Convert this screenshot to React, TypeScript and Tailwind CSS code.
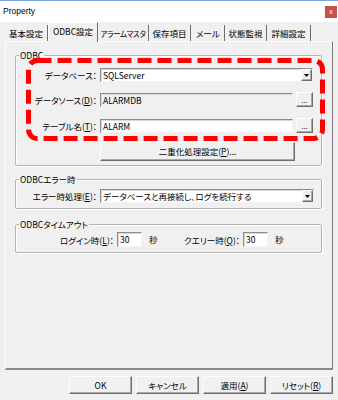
import React from 'react';

const raised =
  'bg-[#f0f0f0] border border-t-[#fcfcfc] border-l-[#fcfcfc] border-r-[#6e6e6e] border-b-[#6e6e6e] shadow-[inset_-1px_-1px_0_#a8a8a8]';
const sunken =
  'border border-t-[#8c8c8c] border-l-[#8c8c8c] border-r-[#f4f4f4] border-b-[#f4f4f4] shadow-[inset_1px_1px_0_#d8d8d8]';

function U({ c }: { c: string }) {
  return <span className="underline underline-offset-1">{c}</span>;
}

function Group({ title, children, className }: { title: string; children: React.ReactNode; className?: string }) {
  return (
    <fieldset
      className={`w-[307px] border border-[#b4b4b4] rounded-[2px] shadow-[inset_1px_1px_0_#fff,1px_1px_0_#fff] ${className ?? ''}`}
    >
      <legend className="ml-[3px] px-[1px] leading-[12px]">{title}</legend>
      {children}
    </fieldset>
  );
}

function Combo({ value, width }: { value: string; width: string }) {
  return (
    <div className={`flex h-[14px] items-center bg-white ${sunken} ${width}`}>
      <span className="flex-1 truncate pl-[2px] leading-[12px]">{value}</span>
      <span className={`flex h-[12px] w-[11px] items-center justify-center ${raised}`}>
        <svg width="5" height="3" viewBox="0 0 5 3">
          <path d="M0 0h5L2.5 3z" fill="#000" />
        </svg>
      </span>
    </div>
  );
}

function Field({ value, disabled }: { value: string; disabled?: boolean }) {
  return (
    <div className={`flex h-[14px] w-[193px] items-center pl-[2px] ${sunken} ${disabled ? 'bg-[#f0f0f0]' : 'bg-white'}`}>
      <span className="leading-[12px]">{value}</span>
    </div>
  );
}

function Dots() {
  return (
    <div className={`ml-[3px] flex h-[15px] w-[17px] items-end justify-center pb-[2px] text-[7px] leading-[7px] ${raised}`}>
      ...
    </div>
  );
}

function Label({ children, w }: { children: React.ReactNode; w: string }) {
  return <div className={`${w} shrink-0 whitespace-nowrap pr-[3px] text-right leading-[12px]`}>{children}</div>;
}

const tabs = [
  { t: '基本設定', w: 'w-[43px]' },
  { t: 'ODBC設定', w: 'w-[50px]', active: true },
  { t: 'アラームマスタ', w: 'w-[51px]', tight: true },
  { t: '保存項目', w: 'w-[42px]' },
  { t: 'メール', w: 'w-[34px]', left: true },
  { t: '状態監視', w: 'w-[42px]' },
  { t: '詳細設定', w: 'w-[44px]' },
];

export default function App() {
  return (
    <div className="relative flex h-[400px] w-[338px] flex-col overflow-hidden bg-[#f0f0f0] font-['Noto_Sans_CJK_JP',sans-serif] text-[8.5px] text-black [font-feature-settings:'palt']">
      {/* title bar */}
      <div className="flex h-[22px] shrink-0 items-center justify-between border-t border-[#7aa7dc] bg-white pl-[3px] pr-[1px]">
        <span className="font-['Liberation_Sans',sans-serif] text-[8.5px]">Property</span>
        <div className="flex h-[12px] w-[12px] items-center justify-center bg-[#c9514b] font-['Liberation_Sans',sans-serif] text-[7px] leading-none text-white">
          x
        </div>
      </div>

      {/* tabs */}
      <div className="flex h-[19px] shrink-0 items-end whitespace-nowrap pl-[5px]">
        {tabs.map((tab) =>
          tab.active ? (
            <div
              key={tab.t}
              className={`relative z-10 -mb-px flex h-[20px] ${tab.w} items-center justify-center border-l border-t border-r border-l-white border-t-white border-r-[#6e6e6e] bg-[#f0f0f0] pb-[2px]`}
            >
              {tab.t}
            </div>
          ) : (
            <div
              key={tab.t}
              className={`flex h-[16px] ${tab.w} items-center ${tab.left ? 'pl-[5px]' : 'justify-center'} ${tab.tight ? 'text-[7.5px] tracking-[-0.4px]' : ''} border-r border-[#6e6e6e] pt-[1px]`}
            >
              {tab.t}
            </div>
          )
        )}
      </div>

      {/* panel */}
      <div className="ml-[5px] h-[329px] w-[328px] shrink-0 border-l border-t border-b-2 border-r border-l-[#fbfbfb] border-t-[#fbfbfb] border-r-[#7a7a7a] border-b-[#8a8a8a] pl-[9px] pt-[7px]">
        <Group title="ODBC">
          <div className="flex items-center pt-[7px]">
            <Label w="w-[84px]">データベース：</Label>
            <Combo value="SQLServer" width="w-[213px]" />
          </div>
          <div className="mt-[10px] flex items-center">
            <Label w="w-[84px]">
              データソース(<U c="D" />)：
            </Label>
            <Field value="ALARMDB" disabled />
            <Dots />
          </div>
          <div className="mt-[11px] flex items-center">
            <Label w="w-[84px]">
              テーブル名(<U c="T" />)：
            </Label>
            <Field value="ALARM" />
            <Dots />
          </div>
          <div className="mt-[9px] pb-[4px] pl-[84px]">
            <div className={`flex h-[19px] w-[195px] items-center justify-center ${raised}`}>
              二重化処理設定(<U c="P" />)...
            </div>
          </div>
        </Group>

        <Group title="ODBCエラー時" className="mt-[7px]">
          <div className="flex items-center pb-[5px] pt-[4px]">
            <Label w="w-[84px]">
              エラー時処理(<U c="E" />)：
            </Label>
            <Combo value="データベースと再接続し、ログを続行する" width="w-[214px]" />
          </div>
        </Group>

        <Group title="ODBCタイムアウト" className="mt-[9px]">
          <div className="flex items-center pb-[5px] pt-[2px]">
            <Label w="w-[101px]">
              ログイン時(<U c="L" />)：
            </Label>
            <div className={`flex h-[15px] w-[25px] items-center bg-white pl-[2px] ${sunken}`}>30</div>
            <span className="ml-[7px] w-[9px]">秒</span>
            <Label w="w-[85px]">
              クエリー時(<U c="Q" />)：
            </Label>
            <div className={`flex h-[15px] w-[25px] items-center bg-white pl-[2px] ${sunken}`}>30</div>
            <span className="ml-[7px]">秒</span>
          </div>
        </Group>
      </div>

      {/* bottom buttons */}
      <div className="mt-[6px] flex gap-[4px] pl-[69px]">
        <div className={`flex h-[18px] w-[63px] items-center justify-center ${raised}`}>OK</div>
        <div className={`flex h-[18px] w-[63px] items-center justify-center ${raised}`}>キャンセル</div>
        <div className={`flex h-[18px] w-[63px] items-center justify-center ${raised}`}>
          適用(<U c="A" />)
        </div>
        <div className={`flex h-[18px] w-[63px] items-center justify-center ${raised}`}>
          リセット(<U c="R" />)
        </div>
      </div>

      {/* red dashed highlight */}
      <svg className="pointer-events-none absolute left-[26px] top-[58px]" width="299" height="83" viewBox="0 0 299 83">
        <rect
          x="2.5"
          y="2.5"
          width="294"
          height="78"
          rx="9"
          fill="none"
          stroke="#ff0000"
          strokeWidth="5"
          strokeDasharray="14 6"
        />
      </svg>
    </div>
  );
}
